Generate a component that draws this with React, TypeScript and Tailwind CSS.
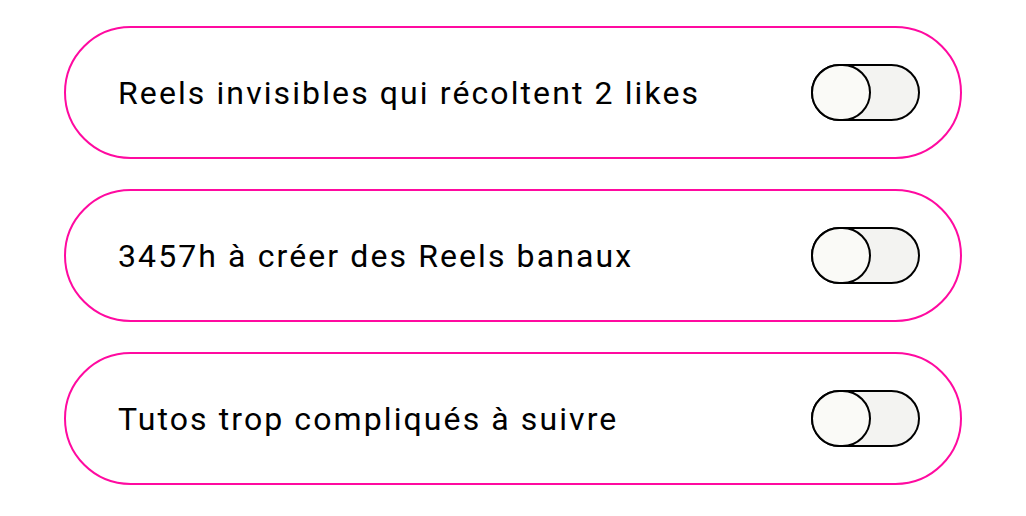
const ITEMS = [
  "Reels invisibles qui récoltent 2 likes",
  "3457h à créer des Reels banaux",
  "Tutos trop compliqués à suivre",
];

function Toggle() {
  return (
    <div className="flex h-[57px] w-[109px] items-center rounded-full border-2 border-black bg-[#f3f3f1]">
      <div className="-ml-[2px] h-[57px] w-[60px] shrink-0 rounded-full border-2 border-black bg-[#fafaf7]" />
    </div>
  );
}

export default function App() {
  return (
    <main
      className="flex min-h-[516px] w-full flex-col items-center gap-[30px] bg-white pt-[26px]"
      style={{ fontFamily: "Roboto, 'Noto Sans', sans-serif" }}
    >
      {ITEMS.map((label) => (
        <div
          key={label}
          className="flex h-[133px] w-[898px] items-center justify-between rounded-full border-2 border-[#ff0aa0] pl-[52px] pr-[40px]"
        >
          <span className="text-[32px] leading-none tracking-[2.1px] text-black">{label}</span>
          <Toggle />
        </div>
      ))}
    </main>
  );
}
